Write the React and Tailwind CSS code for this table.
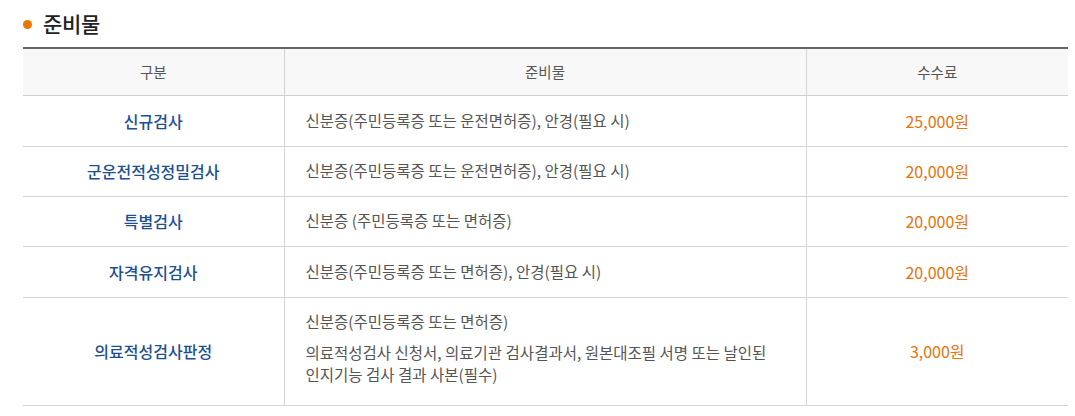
const rows = [
  { name: "신규검사", items: ["신분증(주민등록증 또는 운전면허증), 안경(필요 시)"], fee: "25,000원", h: "h-[51px]" },
  { name: "군운전적성정밀검사", items: ["신분증(주민등록증 또는 운전면허증), 안경(필요 시)"], fee: "20,000원", h: "h-[50px]" },
  { name: "특별검사", items: ["신분증 (주민등록증 또는 면허증)"], fee: "20,000원", h: "h-[50px]" },
  { name: "자격유지검사", items: ["신분증(주민등록증 또는 면허증), 안경(필요 시)"], fee: "20,000원", h: "h-[51px]" },
  {
    name: "의료적성검사판정",
    items: [
      "신분증(주민등록증 또는 면허증)",
      "의료적성검사 신청서, 의료기관 검사결과서, 원본대조필 서명 또는 날인된 인지기능 검사 결과 사본(필수)",
    ],
    fee: "3,000원",
    h: "h-[108px]",
  },
];

export default function App() {
  return (
    <div className="bg-white min-h-screen pl-[23px] pr-[7px] pt-[7px] font-['Noto_Sans_CJK_KR','Noto_Sans',sans-serif]">
      {/* 제목 */}
      <h2 className="flex items-center gap-[11px] h-[34px] text-[21px] font-medium text-[#222] tracking-[-0.3px]">
        <span className="w-[9px] h-[9px] rounded-full bg-[#ec7400]" />
        준비물
      </h2>

      {/* 표 */}
      <table className="w-[1045px] mt-[6px] border-collapse table-fixed border-t-2 border-[#666]">
        <colgroup>
          <col className="w-[261px]" />
          <col className="w-[522px]" />
          <col className="w-[262px]" />
        </colgroup>
        <thead>
          <tr className="h-[47px] bg-[#f8f8f8] border-b border-[#cfcfcf] text-[14.5px] text-[#555]">
            <th className="font-normal">구분</th>
            <th className="font-normal border-x border-[#d5d5d5]">준비물</th>
            <th className="font-normal">수수료</th>
          </tr>
        </thead>
        <tbody>
          {rows.map((r) => (
            <tr key={r.name} className={`${r.h} border-b border-[#d5d5d5]`}>
              <td className="text-center text-[16px] font-medium text-[#1c4f94]">{r.name}</td>
              <td className="border-x border-[#d5d5d5] px-[21px] pb-[2px] text-[15.5px] text-[#555] leading-[22px] break-keep">
                {r.items.map((t, i) => (
                  <p key={i} className={i > 0 ? "mt-[9px]" : ""}>{t}</p>
                ))}
                {r.items.length > 1 && <div className="h-[5px]" />}
              </td>
              <td className="text-center text-[16px] text-[#e8730a]">{r.fee}</td>
            </tr>
          ))}
        </tbody>
      </table>
    </div>
  );
}
